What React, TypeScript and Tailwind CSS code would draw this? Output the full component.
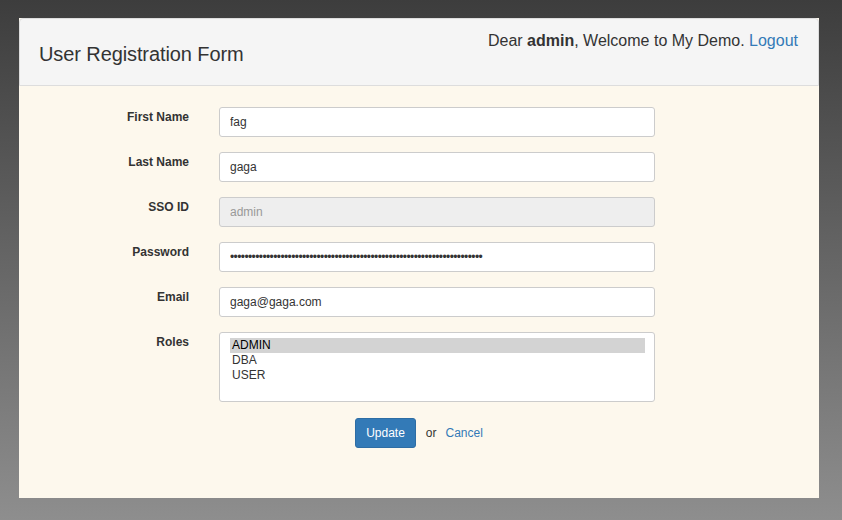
import { useState } from 'react'

const fields = [
    { label: 'First Name', value: 'fag' },
    { label: 'Last Name', value: 'gaga' },
    { label: 'SSO ID', value: 'admin', disabled: true },
    { label: 'Password', value: '•'.repeat(70), password: true },
    { label: 'Email', value: 'gaga@gaga.com' },
]

export default function App() {
    const [roles] = useState(['ADMIN', 'DBA', 'USER'])

    return (
        <div
            className="w-[842px] h-[520px] pt-[18px] pl-[19px] bg-[linear-gradient(to_bottom,#3d3d3d,#8e8e8e)]"
            style={{ fontFamily: '"Liberation Sans", Arial, sans-serif' }}
        >
            <div className="w-[800px] h-[480px] flex flex-col bg-[#fdf8ed]">
                {/* Header */}
                <div className="h-[68px] flex justify-between bg-[#f5f5f5] border border-[#dddddd] rounded-t-[4px] pl-[19px] pr-5">
                    <h3 className="mt-[22px] text-[20px] leading-[26px] text-[#333] tracking-[-0.1px]">User Registration Form</h3>
                    <div className="mt-[11px] text-[16px] leading-[22px] text-[#333]">
                        Dear <b>admin</b>, Welcome to My Demo. <a className="text-[#337ab7]">Logout</a>
                    </div>
                </div>

                {/* Form */}
                <form className="flex flex-col pt-[21px]">
                    {fields.map((f) => (
                        <div key={f.label} className="flex h-[30px] mb-[15px]">
                            <label className="w-[170px] pt-[1px] text-right text-[12px] font-bold text-[#333]">
                                {f.label}
                            </label>
                            <input
                                readOnly
                                disabled={f.disabled}
                                value={f.value}
                                className={`ml-[30px] w-[436px] h-[30px] px-[10px] text-[12px] border border-[#cccccc] rounded-[3px] outline-none ${
                                    f.disabled ? 'bg-[#eeeeee] text-[#999]' : 'bg-white text-[#333]'
                                } ${f.password ? 'text-[8px] tracking-[-0.6px]' : ''}`}
                            />
                        </div>
                    ))}

                    <div className="flex mb-[16px]">
                        <label className="w-[170px] pt-[1px] text-right text-[12px] font-bold text-[#333]">Roles</label>
                        <div className="ml-[30px] w-[436px] h-[70px] bg-white border border-[#cccccc] rounded-[3px] pt-[5px] pl-[10px] pr-[9px]">
                            {roles.map((r, i) => (
                                <div
                                    key={r}
                                    className={`h-[15px] pl-[2px] text-[12px] leading-[15px] text-[#333] ${i === 0 ? 'bg-[#d3d3d3] text-black' : ''}`}
                                >
                                    {r}
                                </div>
                            ))}
                        </div>
                    </div>

                    <div className="flex items-center justify-center">
                        <button
                            type="button"
                            className="h-[30px] px-[10px] text-[12px] text-white bg-[#337ab7] border border-[#2e6da4] rounded-[3px]"
                        >
                            Update
                        </button>
                        <span className="ml-[10px] text-[12px] text-[#333]">or</span>
                        <a className="ml-[9px] text-[12px] text-[#337ab7]">Cancel</a>
                    </div>
                </form>
            </div>
        </div>
    )
}
